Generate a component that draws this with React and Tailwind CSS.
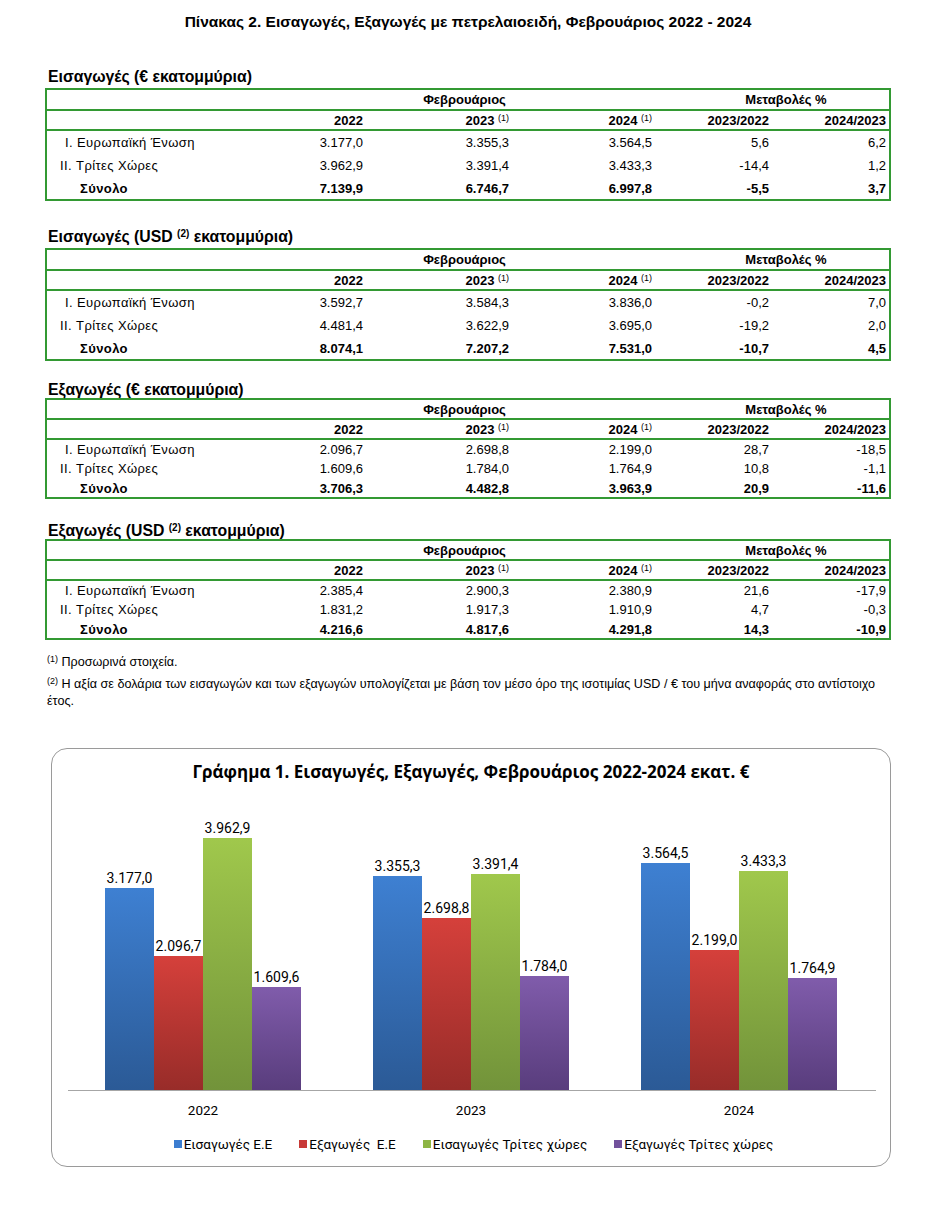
import React from 'react'

const tables = [
    {
        title: <>Εισαγωγές (€ εκατομμύρια)</>,
        wrap: 'mt-[37px]',
        titleCls: 'leading-[17px] mb-[3px]',
        rowHeights: ['h-[23px]', 'h-[24px]', 'h-[21px]'],
        headH: ['h-[21px]', 'h-[20px]'],
        rows: [
            ['3.177,0', '3.355,3', '3.564,5', '5,6', '6,2'],
            ['3.962,9', '3.391,4', '3.433,3', '-14,4', '1,2'],
            ['7.139,9', '6.746,7', '6.997,8', '-5,5', '3,7'],
        ],
    },
    {
        title: <>Εισαγωγές (USD <sup className="text-[10px]">(2)</sup> εκατομμύρια)</>,
        wrap: 'mt-[27px]',
        titleCls: 'leading-[17px] mb-[3px]',
        rowHeights: ['h-[23px]', 'h-[24px]', 'h-[21px]'],
        headH: ['h-[21px]', 'h-[20px]'],
        rows: [
            ['3.592,7', '3.584,3', '3.836,0', '-0,2', '7,0'],
            ['4.481,4', '3.622,9', '3.695,0', '-19,2', '2,0'],
            ['8.074,1', '7.207,2', '7.531,0', '-10,7', '4,5'],
        ],
    },
    {
        title: <>Εξαγωγές (€ εκατομμύρια)</>,
        wrap: 'mt-[21px]',
        titleCls: 'leading-[16px]',
        rowHeights: ['h-[19px]', 'h-[20px]', 'h-[18px]'],
        headH: ['h-[20px]', 'h-[20px]'],
        rows: [
            ['2.096,7', '2.698,8', '2.199,0', '28,7', '-18,5'],
            ['1.609,6', '1.784,0', '1.764,9', '10,8', '-1,1'],
            ['3.706,3', '4.482,8', '3.963,9', '20,9', '-11,6'],
        ],
    },
    {
        title: <>Εξαγωγές (USD <sup className="text-[10px]">(2)</sup> εκατομμύρια)</>,
        wrap: 'mt-[24px]',
        titleCls: 'leading-[16px]',
        rowHeights: ['h-[19px]', 'h-[20px]', 'h-[18px]'],
        headH: ['h-[20px]', 'h-[20px]'],
        rows: [
            ['2.385,4', '2.900,3', '2.380,9', '21,6', '-17,9'],
            ['1.831,2', '1.917,3', '1.910,9', '4,7', '-0,3'],
            ['4.216,6', '4.817,6', '4.291,8', '14,3', '-10,9'],
        ],
    },
]

const labels = [
    { text: 'I. Ευρωπαϊκή Ένωση', cls: 'pl-[18px] tracking-[0.4px]' },
    { text: 'II. Τρίτες Χώρες', cls: 'pl-[13px] tracking-[0.4px]' },
    { text: 'Σύνολο', cls: 'pl-[33px] tracking-[0.4px]' },
]

const cols = 'grid grid-cols-[203px_116px_146px_143px_117px_117px] items-center'

const chart = [
    { year: '2022', values: [3177.0, 2096.7, 3962.9, 1609.6] },
    { year: '2023', values: [3355.3, 2698.8, 3391.4, 1784.0] },
    { year: '2024', values: [3564.5, 2199.0, 3433.3, 1764.9] },
]

const barColors = [
    'bg-gradient-to-b from-[#3e80d2] to-[#2b5a96]',
    'bg-gradient-to-b from-[#d5403b] to-[#982c29]',
    'bg-gradient-to-b from-[#a0c84c] to-[#72933a]',
    'bg-gradient-to-b from-[#805cab] to-[#593d7d]',
]

const legend = [
    { label: 'Εισαγωγές Ε.Ε', color: 'bg-[#3c7dd0]' },
    { label: 'Εξαγωγές  Ε.Ε', color: 'bg-[#c83a36]' },
    { label: 'Εισαγωγές Τρίτες χώρες', color: 'bg-[#8db544]' },
    { label: 'Εξαγωγές Τρίτες χώρες', color: 'bg-[#72519c]' },
]

const fmt = (v) => {
    const [i, d] = v.toFixed(1).split('.')
    return i.replace(/\B(?=(\d{3})+(?!\d))/g, '.') + ',' + d
}

function DataTable({ t }) {
    return (
        <div className={t.wrap}>
            <h2 className={`pl-[3px] text-[15.8px] font-bold ${t.titleCls}`}>{t.title}</h2>
            <div className="border-2 border-[#339933] text-[13px]">
                <div className={`${cols} ${t.headH[0]} border-b-2 border-[#339933] font-bold`}>
                    <div />
                    <div className="col-span-3 pl-[24px] text-center">Φεβρουάριος</div>
                    <div className="col-span-2 pl-[28px] text-center">Μεταβολές %</div>
                </div>
                <div className={`${cols} ${t.headH[1]} border-b-2 border-[#339933] font-bold`}>
                    <div />
                    <div className="pr-[3px] text-right">2022</div>
                    <div className="pr-[3px] text-right">2023 <sup className="text-[9px] font-normal">(1)</sup></div>
                    <div className="pr-[3px] text-right">2024 <sup className="text-[9px] font-normal">(1)</sup></div>
                    <div className="pr-[3px] text-right">2023/2022</div>
                    <div className="pr-[3px] text-right">2024/2023</div>
                </div>
                {t.rows.map((r, i) => (
                    <div key={i} className={`${cols} ${t.rowHeights[i]} ${i === 2 ? 'font-bold' : ''}`}>
                        <div className={labels[i].cls}>{labels[i].text}</div>
                        {r.map((v, j) => (
                            <div key={j} className="pr-[3px] text-right">{v}</div>
                        ))}
                    </div>
                ))}
            </div>
        </div>
    )
}

export default function App() {
    return (
        <div className="w-[936px] bg-white px-[45px] pb-[54px] text-black font-['Liberation_Sans',Arial,sans-serif]">
            <h1 className="pt-[13px] text-center text-[15.5px] font-bold leading-[18px] font-['Liberation_Sans_Narrow','Liberation_Sans',Arial,sans-serif]">
                Πίνακας 2. Εισαγωγές, Εξαγωγές με πετρελαιοειδή, Φεβρουάριος 2022 - 2024
            </h1>

            {tables.map((t, i) => (
                <DataTable key={i} t={t} />
            ))}

            {/* footnotes */}
            <div className="mt-[14px] pl-[2px] text-[12.6px] leading-[17px]">
                <p><span className="inline-block align-top text-[9px] leading-[11px]">(1)</span> Προσωρινά στοιχεία.</p>
                <p className="mt-[5px] whitespace-nowrap">
                    <span className="inline-block align-top text-[9px] leading-[11px]">(2)</span>{' '}
                    <span>Η αξία σε δολάρια των εισαγωγών και των εξαγωγών υπολογίζεται με βάση τον μέσο όρο της ισοτιμίας USD / € του μήνα αναφοράς στο αντίστοιχο</span>
                </p>
                <p>έτος.</p>
            </div>

            {/* chart */}
            <div className="ml-[6px] mt-[38px] h-[419px] w-[840px] rounded-[16px] border border-[#9a9a9a] font-['Roboto',sans-serif]">
                <div className="pt-[13px] text-center text-[17px] font-bold leading-[20px] font-['Open_Sans',sans-serif]">
                    Γράφημα 1. Εισαγωγές, Εξαγωγές, Φεβρουάριος 2022-2024 εκατ. €
                </div>
                <div className="ml-[16px] flex h-[309px] w-[808px] items-end border-b border-[#a6a6a6] pl-[1px]">
                    {chart.map((g) => (
                        <div key={g.year} className="flex w-[268px] items-end justify-center">
                            {g.values.map((v, k) => (
                                <div key={k} className="flex w-[49px] flex-col items-center">
                                    <span className="mb-[2px] whitespace-nowrap text-[14px] leading-[16px]">{fmt(v)}</span>
                                    <div className={`w-[49px] ${barColors[k]}`} style={{ height: `${v * 0.0637}px` }} />
                                </div>
                            ))}
                        </div>
                    ))}
                </div>
                <div className="ml-[17px] mt-[11px] flex text-[13.5px] leading-[16px]">
                    {chart.map((g) => (
                        <div key={g.year} className="w-[268px] text-center">{g.year}</div>
                    ))}
                </div>
                <div className="mt-[18px] flex justify-center gap-[27px] pl-[5px] text-[13.5px] leading-[16px]">
                    {legend.map((l) => (
                        <div key={l.label} className="flex items-center gap-[2px] whitespace-pre">
                            <span className={`block h-[8px] w-[8px] shrink-0 ${l.color}`} />
                            {l.label}
                        </div>
                    ))}
                </div>
            </div>
        </div>
    )
}
